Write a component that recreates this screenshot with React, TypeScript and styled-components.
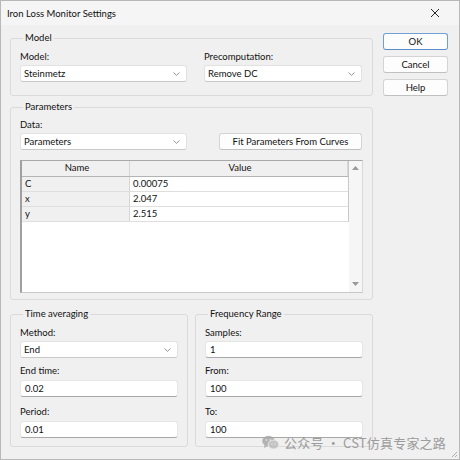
import styled, { createGlobalStyle } from 'styled-components';

const GlobalStyle = createGlobalStyle`
  html, body {
    margin: 0;
    padding: 0;
    background: #ffffff;
  }
  body {
    font-family: Lato, "Noto Sans", sans-serif;
    font-size: 9.5px;
    color: #111111;
  }
  * {
    box-sizing: border-box;
  }
`;

const Window = styled.div`
  position: relative;
  width: 460px;
  height: 460px;
  border: 1px solid #b8b8b8;
  background: #f0f0f0;
  display: flex;
  flex-direction: column;
  overflow: hidden;
`;

const TitleBar = styled.div`
  height: 24px;
  display: flex;
  align-items: center;
  justify-content: space-between;
  padding: 0 19px 0 6px;
  background: #f5f5f5;
`;

const Title = styled.span`
  font-size: 9.5px;
`;

const Body = styled.div`
  display: flex;
  padding: 6px 0 0 9px;
`;

const Main = styled.div`
  width: 363px;
  display: flex;
  flex-direction: column;
`;

const Side = styled.div`
  width: 65px;
  margin: 2px 0 0 10px;
  display: flex;
  flex-direction: column;
  gap: 6px;
`;

const Group = styled.fieldset<{ $top?: number; $pad: string }>`
  margin: ${(p) => p.$top ?? 0}px 0 0 0;
  min-width: 0;
  border: 1px solid #dadada;
  border-radius: 3px;
  padding: ${(p) => p.$pad};
`;

const Legend = styled.legend`
  padding: 0 2px;
  margin-left: 3px;
  line-height: 14px;
`;

const ModelGrid = styled.div`
  display: grid;
  grid-template-columns: 167px 158px;
  column-gap: 17px;
`;

const Field = styled.div<{ $gap?: number }>`
  display: flex;
  flex-direction: column;
  margin-top: ${(p) => p.$gap ?? 0}px;
`;

const Label = styled.label<{ $space?: number }>`
  line-height: 14px;
  margin-bottom: ${(p) => p.$space ?? 1}px;
`;

const Combo = styled.div<{ $width?: number }>`
  height: 17px;
  width: ${(p) => (p.$width ? `${p.$width}px` : 'auto')};
  background: #ffffff;
  border: 1px solid #e2e2e2;
  border-bottom-color: #c8c8c8;
  border-radius: 3px;
  display: flex;
  align-items: center;
  justify-content: space-between;
  padding: 0 6px 0 3px;
  line-height: 15px;
`;

const Input = styled.div`
  height: 17px;
  width: 158px;
  background: #ffffff;
  border: 1px solid #e6e6e6;
  border-bottom: 1px solid #a8a8a8;
  border-radius: 3px;
  padding: 0 4px;
  line-height: 15px;
`;

const Button = styled.div<{ $default?: boolean; $width?: number }>`
  height: 17px;
  width: ${(p) => (p.$width ? `${p.$width}px` : '100%')};
  background: #fdfdfd;
  border: 1px solid ${(p) => (p.$default ? '#6f9fd4' : '#d4d4d4')};
  border-bottom-color: ${(p) => (p.$default ? '#5b8fcb' : '#c0c0c0')};
  border-radius: 3px;
  display: flex;
  align-items: center;
  justify-content: center;
  line-height: 15px;
`;

const DataRow = styled.div`
  display: flex;
  align-items: flex-end;
  justify-content: space-between;
  padding-right: 1px;
`;

const TableFrame = styled.div`
  margin-top: 10px;
  height: 133px;
  display: flex;
  border: 1px solid #a9a9a9;
  border-left: 2px solid #a0a0a0;
  border-right-color: #d8d8d8;
  border-bottom-color: #c8c8c8;
  background: #ffffff;
`;

const GridArea = styled.div`
  flex: 1;
  display: flex;
  flex-direction: column;
`;

const Row = styled.div<{ $head?: boolean }>`
  display: grid;
  grid-template-columns: 108px 1fr;
  height: ${(p) => (p.$head ? 16 : 15)}px;
  border-bottom: 1px solid ${(p) => (p.$head ? '#b4b4b4' : '#dedede')};
  border-right: 1px solid #c8c8c8;
`;

const Cell = styled.div<{ $head?: boolean; $name?: boolean }>`
  line-height: 14px;
  padding-left: 3px;
  text-align: ${(p) => (p.$head ? 'center' : 'left')};
  background: ${(p) => (p.$head || p.$name ? '#f0f0f0' : '#ffffff')};
  border-right: ${(p) => (p.$head || p.$name ? '1px solid #d6d6d6' : 'none')};
`;

const ScrollBar = styled.div`
  width: 13px;
  background: #f6f6f6;
  display: flex;
  flex-direction: column;
  justify-content: space-between;
  align-items: center;
  padding: 5px 0 6px;
`;

const BottomRow = styled.div`
  display: flex;
  gap: 7px;
  margin-top: 7px;
`;

const HalfGroup = styled(Group)`
  width: 178px;
`;

const Watermark = styled.div`
  position: absolute;
  left: 261px;
  top: 432px;
  display: flex;
  align-items: center;
  gap: 5px;
  font-family: "Noto Sans CJK SC", "Noto Sans", sans-serif;
  font-size: 13px;
  color: #8e8e8e;
  opacity: 0.85;
  letter-spacing: 0.2px;
`;

const Grip = styled.svg`
  position: absolute;
  right: 1px;
  bottom: 1px;
`;

const Chevron = () => (
  <svg width="7" height="4" viewBox="0 0 7 4">
    <path d="M0.5 0.5 L3.5 3.3 L6.5 0.5" fill="none" stroke="#8a8a8a" strokeWidth="0.9" />
  </svg>
);

const Arrow = ({ down }: { down?: boolean }) => (
  <svg width="7" height="4" viewBox="0 0 7 4">
    <path d={down ? 'M0 0 L7 0 L3.5 4 Z' : 'M0 4 L7 4 L3.5 0 Z'} fill="#9a9a9a" />
  </svg>
);

const WeChat = () => (
  <svg width="17" height="15" viewBox="0 0 17 15">
    <ellipse cx="6.5" cy="6" rx="6.3" ry="5.3" fill="#a8a8a8" />
    <path d="M2.5 10 L2 13 L5.5 11 Z" fill="#a8a8a8" />
    <ellipse cx="11.5" cy="9.5" rx="5.3" ry="4.5" fill="#bdbdbd" stroke="#f0f0f0" strokeWidth="0.8" />
    <circle cx="4.5" cy="5" r="0.8" fill="#f0f0f0" />
    <circle cx="8.3" cy="5" r="0.8" fill="#f0f0f0" />
    <circle cx="10" cy="9" r="0.6" fill="#f0f0f0" />
    <circle cx="13" cy="9" r="0.6" fill="#f0f0f0" />
  </svg>
);

const rows = [
  { name: 'C', value: '0.00075' },
  { name: 'x', value: '2.047' },
  { name: 'y', value: '2.515' },
];

export default function App() {
  return (
    <>
      <GlobalStyle />
      <Window>
        <TitleBar>
          <Title>Iron Loss Monitor Settings</Title>
          <svg width="10" height="10" viewBox="0 0 10 10">
            <path d="M1 1 L9 9 M9 1 L1 9" stroke="#2a2a2a" strokeWidth="1" />
          </svg>
        </TitleBar>
        <Body>
          <Main>
            <Group $pad="5px 9px 13px 9px">
              <Legend>Model</Legend>
              <ModelGrid>
                <Field>
                  <Label>Model:</Label>
                  <Combo>
                    Steinmetz
                    <Chevron />
                  </Combo>
                </Field>
                <Field>
                  <Label>Precomputation:</Label>
                  <Combo>
                    Remove DC
                    <Chevron />
                  </Combo>
                </Field>
              </ModelGrid>
            </Group>

            <Group $top={4} $pad="4px 9px 6px 9px">
              <Legend>Parameters</Legend>
              <DataRow>
                <Field>
                  <Label>Data:</Label>
                  <Combo $width={167}>
                    Parameters
                    <Chevron />
                  </Combo>
                </Field>
                <Button $width={143}>Fit Parameters From Curves</Button>
              </DataRow>
              <TableFrame>
                <GridArea>
                  <Row $head>
                    <Cell $head>Name</Cell>
                    <Cell $head>Value</Cell>
                  </Row>
                  {rows.map((r) => (
                    <Row key={r.name}>
                      <Cell $name>{r.name}</Cell>
                      <Cell>{r.value}</Cell>
                    </Row>
                  ))}
                </GridArea>
                <ScrollBar>
                  <Arrow />
                  <Arrow down />
                </ScrollBar>
              </TableFrame>
            </Group>

            <BottomRow>
              <HalfGroup $pad="5px 9px 8px 9px">
                <Legend>Time averaging</Legend>
                <Field>
                  <Label>Method:</Label>
                  <Combo $width={158}>
                    End
                    <Chevron />
                  </Combo>
                </Field>
                <Field $gap={6}>
                  <Label $space={2}>End time:</Label>
                  <Input>0.02</Input>
                </Field>
                <Field $gap={8}>
                  <Label $space={2}>Period:</Label>
                  <Input>0.01</Input>
                </Field>
              </HalfGroup>
              <HalfGroup $pad="5px 9px 8px 9px">
                <Legend>Frequency Range</Legend>
                <Field>
                  <Label>Samples:</Label>
                  <Input>1</Input>
                </Field>
                <Field $gap={6}>
                  <Label $space={2}>From:</Label>
                  <Input>100</Input>
                </Field>
                <Field $gap={8}>
                  <Label $space={2}>To:</Label>
                  <Input>100</Input>
                </Field>
              </HalfGroup>
            </BottomRow>
          </Main>

          <Side>
            <Button $default>OK</Button>
            <Button>Cancel</Button>
            <Button>Help</Button>
          </Side>
        </Body>

        <Watermark>
          <WeChat />
          公众号 · CST仿真专家之路
        </Watermark>
        <Grip width="8" height="8" viewBox="0 0 8 8">
          <path d="M7 2 L2 7 M7 5 L5 7" stroke="#a0a0a0" strokeWidth="0.8" />
        </Grip>
      </Window>
    </>
  );
}
